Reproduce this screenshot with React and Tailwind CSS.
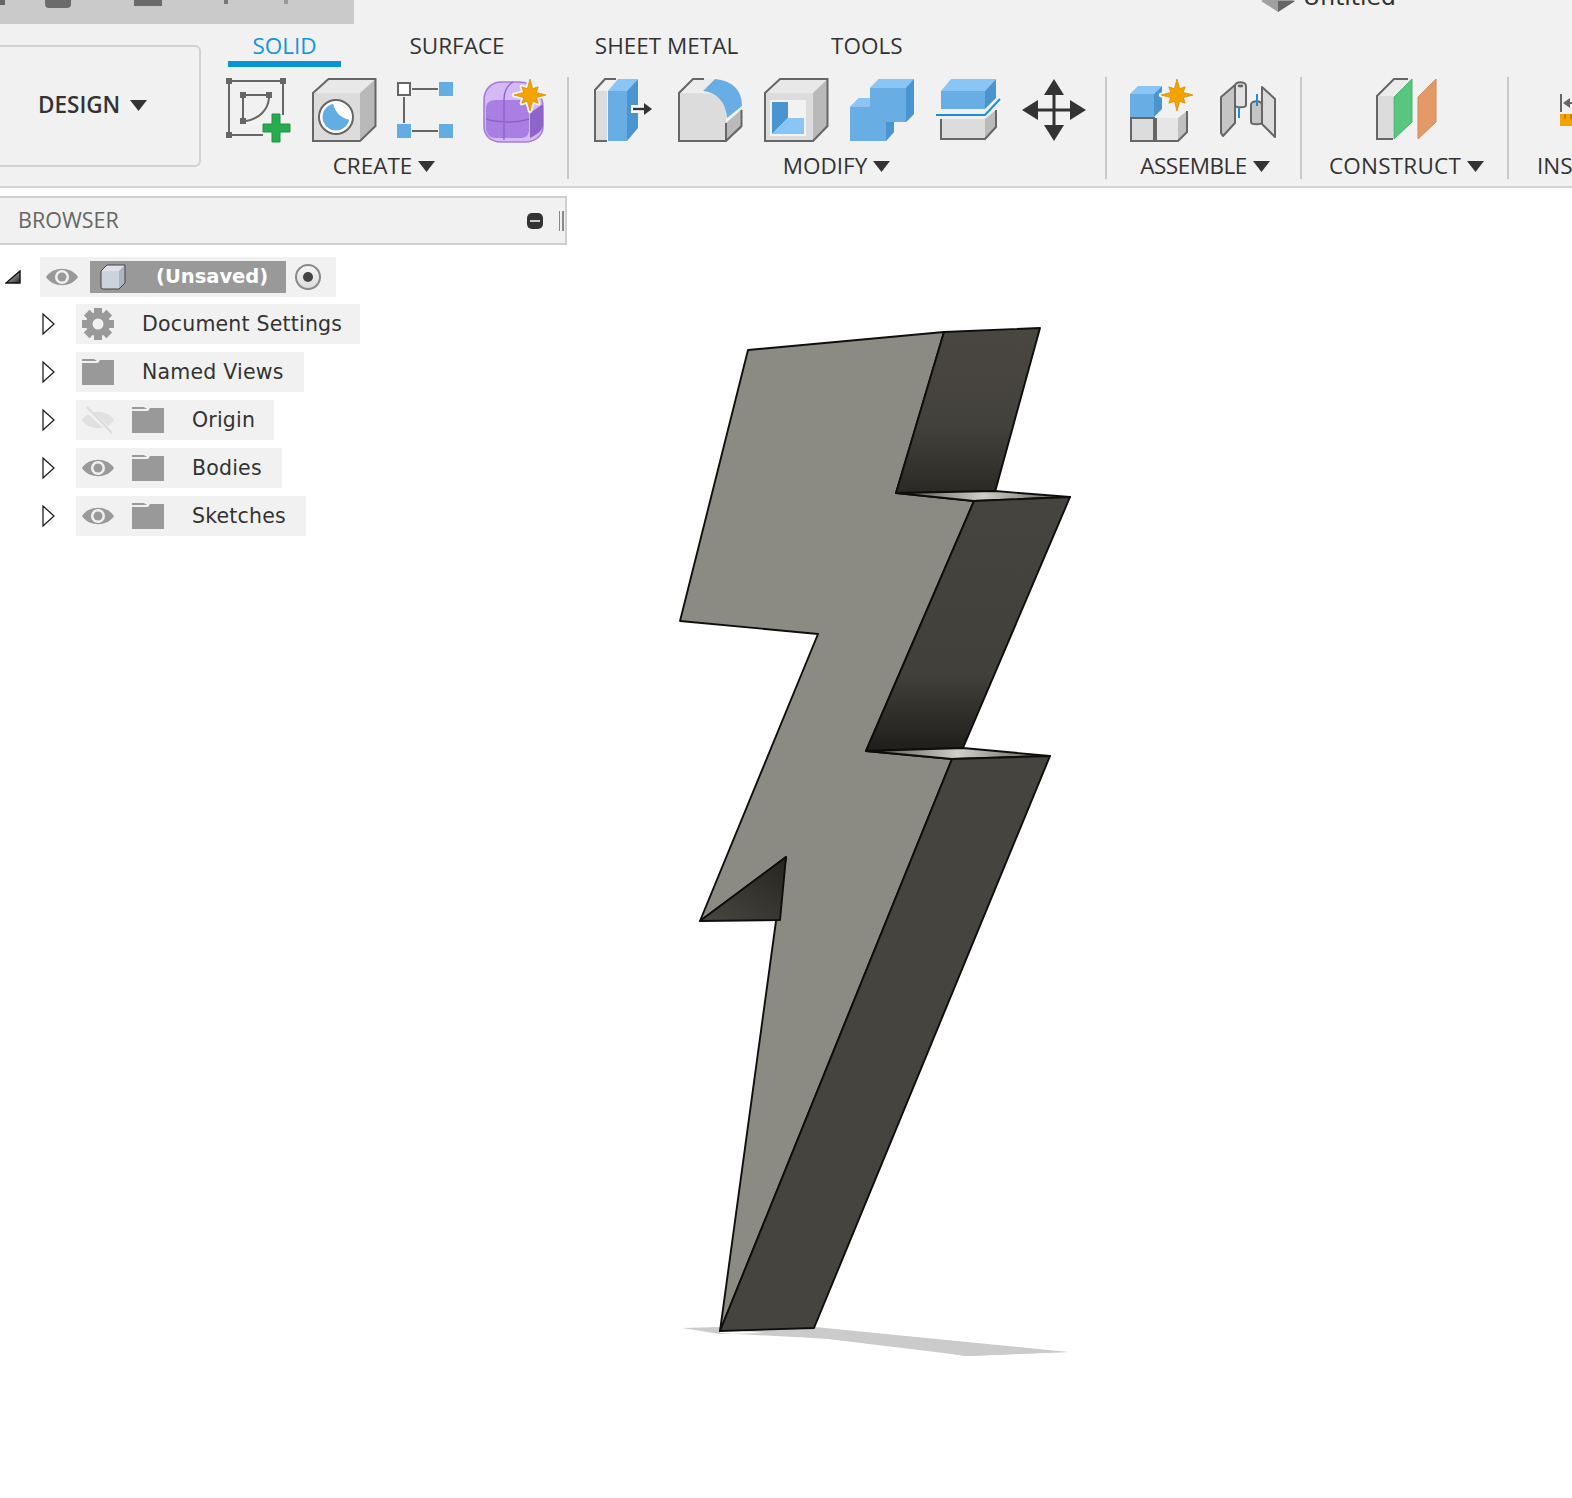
import React from "react";

const G = "#666666";
const Ico = ({ children, w = 64 }) => (
  <svg width={w} height="64" viewBox={`0 0 ${w} 64`} className="shrink-0 overflow-visible">{children}</svg>
);
const Star = ({ cx, cy, r = 16 }) => {
  const pts = [];
  for (let i = 0; i < 16; i++) {
    const a = (i * Math.PI) / 8 - Math.PI / 2;
    const R = i % 2 === 0 ? (i % 4 === 0 ? r : r * 0.72) : r * 0.42;
    pts.push(`${cx + R * Math.cos(a)},${cy + R * Math.sin(a)}`);
  }
  const p = pts.join(" ");
  return (
    <>
      <polygon points={p} fill="#f1f1f1" stroke="#f1f1f1" strokeWidth="4.5" strokeLinejoin="round" />
      <polygon points={p} fill="#f5a300" stroke="#d98f00" strokeWidth="0.8" />
    </>
  );
};
const Caret = ({ w = 17, h = 11 }) => (
  <svg width={w} height={h} viewBox="0 0 17 11" className="shrink-0"><polygon points="0,0 17,0 8.5,11" fill="#333" /></svg>
);

const Sketch = () => (
  <Ico>
    <g stroke={G} strokeWidth="2" fill="none">
      <path d="M5 3H54M56 6V37M2 6V54M5 57H36M18 17H40M16 20V40M19 43C32 41 41 32 42 20" />
    </g>
    {[[2, 3], [56, 3], [2, 57], [16, 17], [42, 17], [16, 43]].map(([x, y]) => (
      <rect key={x + "-" + y} x={x - 3} y={y - 3} width="6" height="6" fill={G} />
    ))}
    <path d="M45 36h8v10h10v8H53v10h-8V54H36v-8h9z" fill="#26ab50" stroke="#1d9443" strokeWidth="1" />
  </Ico>
);
const Extrude = () => (
  <Ico>
    <polygon points="1,15 48,15 48,63 1,63" fill="#dcdcdc" />
    <polygon points="1,15 16.5,1 63.5,1 48,15" fill="#e8e8e8" />
    <polygon points="48,15 63.5,1 63.5,48 48,63" fill="#b9b9b9" />
    <path d="M1 15L16.5 1H63.5V48L48 63H1Z" fill="none" stroke={G} strokeWidth="2" />
    <circle cx="24" cy="39" r="17" fill="#fff" stroke={G} strokeWidth="2" />
    <circle cx="24" cy="39" r="13.5" fill="#62ade4" />
    <path d="M21 25 C23 34 28 40 38 42 C39 33 32 24 21 25Z" fill="#fff" />
  </Ico>
);
const Pattern = () => (
  <Ico w={56}>
    <path d="M15 11H41M15 53H41M7 19V45" stroke={G} strokeWidth="2" />
    <rect x="1" y="5" width="12" height="12" fill="#fff" stroke={G} strokeWidth="2" />
    <rect x="42" y="4" width="14" height="14" fill="#62ade4" />
    <rect x="0" y="46" width="14" height="14" fill="#62ade4" />
    <rect x="42" y="46" width="14" height="14" fill="#62ade4" />
  </Ico>
);
const Form = () => (
  <Ico>
    <path d="M1 22C1 11 9 4 18 4H36C50 4 60 14 60 30V48C60 58 52 64 42 64H18C8 64 1 58 1 48Z" fill="#d4b9f5" stroke="#a57ddb" strokeWidth="1.6" />
    <path d="M3 30C3 25 7 22 12 22H38C43 22 46 26 46 31V52C46 57 43 60 38 60H12C7 60 3 56 3 50Z" fill="#a97fe3" />
    <path d="M47 35L60 26V46C60 52 55 56 47 60Z" fill="#8f63c9" />
    <path d="M3 41C15 45 34 45 46 41M21 22V62M30 4C23 8 21 14 21 22" stroke="#8f63c9" strokeWidth="1.4" fill="none" />
    <Star cx={47} cy={17} />
  </Ico>
);
const PressPull = () => (
  <Ico>
    <polygon points="3,13 15,13 15,63 3,63" fill="#dcdcdc" />
    <path d="M15 63H3V12L13 1H24" fill="none" stroke={G} strokeWidth="2" />
    <polygon points="16,13 35,13 35,63 16,63" fill="#68aee4" />
    <polygon points="16,13 26,1 46,1 35,13" fill="#89c6f5" />
    <polygon points="35,13 46,1 46,50 35,63" fill="#4a94cf" />
    <rect x="39" y="27" width="9" height="8" fill="#fff" />
    <path d="M41 31H54" stroke="#333" strokeWidth="2.4" />
    <polygon points="52,25 60,31 52,37" fill="#333" />
  </Ico>
);
const Fillet = () => (
  <Ico>
    <path d="M1 15H25Q48 15 48 39V63H1Z" fill="#dcdcdc" />
    <polygon points="1,15 15,1 37,1 24,14" fill="#ececec" />
    <path d="M25 13L37 1Q64 4 64 28L49 40Q47 16 25 13Z" fill="#68aee4" />
    <polygon points="48,45 64,31 64,50 48,63" fill="#bababa" />
    <path d="M26 1H15L1 15V63H48L63.5 48V32M48 45V63" fill="none" stroke={G} strokeWidth="2" />
  </Ico>
);
const Shell = () => (
  <Ico>
    <polygon points="1,15 49,15 49,63 1,63" fill="#dcdcdc" />
    <polygon points="1,15 16,1 63.5,1 49,15" fill="#e8e8e8" />
    <polygon points="49,15 63.5,1 63.5,48 49,63" fill="#b9b9b9" />
    <path d="M1 15L16 1H63.5V48L49 63H1Z" fill="none" stroke={G} strokeWidth="2" />
    <rect x="6" y="22" width="36" height="36" fill="#f2f2f2" />
    <polygon points="8,24 24,24 24,40 8,56" fill="#4a94cf" />
    <polygon points="8,56 24,40 40,40 40,56" fill="#89c6f5" />
  </Ico>
);
const Combine = () => (
  <Ico>
    <polygon points="0,29 9,20 20,20 20,10 29,1 64,1 64,36 56,44 44,44 44,54 36,63 0,63" fill="#68aee4" />
    <polygon points="20,10 29,1 64,1 56,10" fill="#89c6f5" />
    <polygon points="0,29 9,20 20,20 20,29" fill="#89c6f5" />
    <polygon points="56,10 64,1 64,36 56,44" fill="#4a94cf" />
    <polygon points="36,44 44,44 44,54 36,63" fill="#4a94cf" />
  </Ico>
);
const Split = () => (
  <Ico>
    <polygon points="5,13 49,13 49,31 5,31" fill="#68aee4" />
    <polygon points="5,13 15,1 60,1 49,13" fill="#89c6f5" />
    <polygon points="49,13 60,1 60,20 49,31" fill="#4a94cf" />
    <polygon points="5,41 49,41 49,61 5,61" fill="#dcdcdc" />
    <polygon points="49,41 60,32 60,49 49,61" fill="#bababa" />
    <path d="M5 41V61H49L60 49V32" fill="none" stroke={G} strokeWidth="2" />
    <path d="M0 37H49L64 21" fill="none" stroke="#1b8ddf" strokeWidth="2" />
  </Ico>
);
const Move = () => (
  <Ico>
    <path d="M32 10V54M10 32H54" stroke="#333" strokeWidth="3" />
    <polygon points="32,1 42,17 22,17" fill="#333" />
    <polygon points="32,63 42,47 22,47" fill="#333" />
    <polygon points="0,32 16,22 16,42" fill="#333" />
    <polygon points="64,32 48,22 48,42" fill="#333" />
  </Ico>
);
const NewComponent = () => (
  <Ico>
    <polygon points="1,40 24,40 24,63 1,63" fill="#dcdcdc" stroke={G} strokeWidth="2" />
    <polygon points="26,40 48,40 48,63 26,63" fill="#e6e6e6" />
    <polygon points="32,40 49,40 57,33 57,40" fill="#f2f2f2" />
    <polygon points="48,40 57,33 57,54 48,63" fill="#c0c0c0" />
    <path d="M26 40V63H48L57 54V33" fill="none" stroke={G} strokeWidth="2" />
    <polygon points="0,16 24,16 24,39 0,39" fill="#68aee4" />
    <polygon points="0,16 8,8 32,8 24,16" fill="#89c6f5" />
    <polygon points="24,16 32,8 32,31 24,39" fill="#4a94cf" />
    <Star cx={47} cy={17} />
  </Ico>
);
const Joint = () => (
  <Ico>
    <polygon points="5,19 19,7 19,45 7,58 5,55" fill="#c5c5c5" stroke={G} strokeWidth="2" strokeLinejoin="round" />
    <path d="M19 8C19 3 30 3 30 8V27C30 30 19 30 19 27Z" fill="#e2e2e2" stroke={G} strokeWidth="2" />
    <ellipse cx="24.5" cy="8" rx="3" ry="1.4" fill={G} />
    <path d="M23 29V40" stroke="#1b8ddf" strokeWidth="2" />
    <polygon points="46,9 59,21 59,59 46,46" fill="#dcdcdc" stroke={G} strokeWidth="2" strokeLinejoin="round" />
    <path d="M35 27C35 22 46 22 46 27V44C46 47 35 47 35 44Z" fill="#c5c5c5" stroke={G} strokeWidth="2" />
    <path d="M41 16V28" stroke="#1b8ddf" strokeWidth="2" />
  </Ico>
);
const Construct = () => (
  <Ico>
    <polygon points="3,18 19,18 19,61 3,61" fill="#dcdcdc" />
    <polygon points="3,18 20,1 36,1 19,18" fill="#ececec" />
    <path d="M19 61H3V18L20 1H34" fill="none" stroke={G} strokeWidth="2" />
    <polygon points="20,19 38,1 38,44 20,61" fill="#58c67f" stroke="#4bb26f" strokeWidth="1" />
    <polygon points="44,19 62,1 62,44 44,61" fill="#e49a66" stroke="#d08a58" strokeWidth="1" />
  </Ico>
);
const Insert = () => (
  <Ico w={30}>
    <path d="M5 16V34" stroke={G} strokeWidth="2" />
    <polygon points="7,25 14,20 14,30" fill={G} />
    <path d="M14 25H20" stroke={G} strokeWidth="2" />
    <rect x="4" y="36" width="26" height="12" fill="#f5a300" />
    <path d="M9 36V41M15 36V41M21 36V41" stroke="#b87a00" strokeWidth="1.5" />
  </Ico>
);

const Eye = ({ off }) =>
  off ? (
    <svg width="32" height="28" viewBox="0 0 32 28" className="shrink-0">
      <path d="M0 14C7 3 25 3 32 14C25 25 7 25 0 14Z" fill="#e0e0e0" />
      <path d="M3 2L29 26" stroke="#f1f1f1" strokeWidth="5" />
      <path d="M5 1L30 27" stroke="#dcdcdc" strokeWidth="2" />
    </svg>
  ) : (
    <svg width="32" height="20" viewBox="0 0 32 20" className="shrink-0">
      <path d="M0 10C7 -1 25 -1 32 10C25 21 7 21 0 10Z" fill="#999" />
      <circle cx="16" cy="10" r="7" fill="#f1f1f1" />
      <circle cx="16" cy="10" r="4.5" fill="#999" />
    </svg>
  );
const Folder = () => (
  <svg width="32" height="26" viewBox="0 0 32 26" className="shrink-0">
    <path d="M0 0H12L15 2H0Z" fill="#999" />
    <path d="M0 4H16L18 1H32V26H0Z" fill="#999" />
  </svg>
);
const Gear = () => {
  const teeth = [0, 45, 90, 135];
  return (
    <svg width="32" height="32" viewBox="0 0 32 32" className="shrink-0">
      {teeth.map((a) => (
        <rect key={a} x="12" y="0" width="8" height="32" fill="#999" transform={`rotate(${a} 16 16)`} />
      ))}
      <circle cx="16" cy="16" r="12" fill="#999" />
      <circle cx="16" cy="16" r="5.5" fill="#f1f1f1" />
    </svg>
  );
};
const Tri = () => (
  <svg width="13" height="22" viewBox="0 0 13 22" className="shrink-0">
    <polygon points="1,1 12,11 1,21" fill="#fff" stroke="#222" strokeWidth="1.3" />
  </svg>
);

const treeFont = "font-['DejaVu_Sans','Liberation_Sans',sans-serif]";

const Row = ({ width, eye, gear, off, label }) => (
  <div className="flex items-center h-10">
    <div className="w-[76px] pl-[42px] flex items-center"><Tri /></div>
    <div style={{ width }} className="h-10 bg-[#f1f1f1] flex items-center pl-[6px]">
      {eye && <div className="mr-[18px]"><Eye off={off} /></div>}
      {gear ? <Gear /> : <Folder />}
      <span className={`ml-[28px] text-[#333] text-[20.5px] tracking-[0.2px] whitespace-nowrap ${treeFont}`}>{label}</span>
    </div>
  </div>
);

const Group = ({ children, label, gap = "gap-[22px]", className = "", labelClass = "" }) => (
  <div className={`h-[102px] flex flex-col shrink-0 border-r-2 border-[#c9c9c9] ${className}`}>
    <div className={`flex ${gap} h-[64px] mt-px`}>{children}</div>
    <div className={`flex items-center justify-center gap-[6px] mt-[11px] h-[26px] text-[22.5px] text-[#333] whitespace-nowrap ${labelClass}`}>
      <span>{label}</span>
      <Caret />
    </div>
  </div>
);

export default function App() {
  return (
    <div className="relative w-[1572px] h-[1498px] bg-white overflow-hidden font-['Open_Sans','Liberation_Sans',sans-serif]">
      <header className="h-[188px] bg-[#f1f1f1] border-b-2 border-[#d2d2d2] overflow-hidden">
        <div className="h-6 flex justify-between">
          <div className="w-[354px] h-6 bg-[#cacaca] flex items-start">
            <div className="w-[5px] h-[5px] bg-[#666]" />
            <div className="ml-[40px] w-[26px] h-2 bg-[#6b6b6b] rounded-b-sm" />
            <div className="ml-[63px] w-[28px] h-[6px] bg-[#6b6b6b]" />
            <div className="ml-[62px] w-1 h-1 bg-[#777]" />
            <div className="ml-[56px] w-1 h-1 bg-[#999]" />
          </div>
          <div className="flex items-start mr-[176px] -mt-[19px]">
            <svg width="34" height="32" viewBox="0 0 34 32">
              <polygon points="0,20 17,12 34,20 17,31" fill="#a0a0a0" />
              <polygon points="17,20 34,20 17,31" fill="#666" />
            </svg>
            <span className="ml-[8px] text-[23.5px] leading-[32px] text-[#333] font-['DejaVu_Sans',sans-serif]">Untitled</span>
          </div>
        </div>
        <div className="flex">
          <div className="-ml-[10px] w-[211px] h-[122px] mt-[21px] border-2 border-[#d2d2d2] rounded-md flex items-center pl-[46px] pb-[2px] shrink-0">
            <span className="font-semibold text-[22.5px] text-[#333]">DESIGN</span>
            <span className="ml-[10px]"><Caret /></span>
          </div>
          <div className="ml-[26px] flex flex-col">
            <nav className="flex h-[43px] pl-px text-[22.5px] text-[#333] leading-[43px]">
              <div className="w-[113px] h-[43px] text-center text-[#0f97dd] border-b-[6px] border-[#0696d7]">SOLID</div>
              <div className="ml-[68px] w-[96px] text-center whitespace-nowrap">SURFACE</div>
              <div className="ml-[89px] w-[145px] text-center whitespace-nowrap">SHEET METAL</div>
              <div className="ml-[92px] w-[71px] text-center whitespace-nowrap">TOOLS</div>
            </nav>
            <div className="flex mt-[10px]">
              <Group label="CREATE" gap="gap-[21px]" className="pr-[20px]" labelClass="pr-[6px]">
                <Sketch /><Extrude /><Pattern /><div className="ml-[9px]"><Form /></div>
              </Group>
              <Group label="MODIFY" className="pl-[23px] pr-[19px]" labelClass="pr-[5px]">
                <PressPull /><Fillet /><Shell /><Combine /><Split /><Move />
              </Group>
              <Group label="ASSEMBLE" className="pl-[23px] pr-[20px]" labelClass="tracking-[-0.5px]">
                <NewComponent /><Joint />
              </Group>
              <Group label="CONSTRUCT" className="pl-[24px] pr-[21px]" labelClass="tracking-[0.2px] pl-px">
                <div className="mx-[48px]"><Construct /></div>
              </Group>
              <div className="h-[102px] flex flex-col shrink-0">
                <div className="h-[64px] mt-px pl-[47px]"><Insert /></div>
                <div className="flex items-center mt-[11px] h-[26px] pl-[28px] text-[22.5px] text-[#333] whitespace-nowrap">INS</div>
              </div>
            </div>
          </div>
        </div>
      </header>

      <main className="relative h-[1310px]">
        <svg className="absolute left-[660px] top-[122px]" width="420" height="1060" viewBox="660 310 420 1060">
          <defs>
            <linearGradient id="s1" x1="0" y1="0" x2="0" y2="1">
              <stop offset="0" stopColor="#4a4741" />
              <stop offset="0.6" stopColor="#43413b" />
              <stop offset="1" stopColor="#2a2925" />
            </linearGradient>
            <linearGradient id="s2" x1="0" y1="0" x2="0" y2="1">
              <stop offset="0" stopColor="#46443e" />
              <stop offset="0.7" stopColor="#41403a" />
              <stop offset="1" stopColor="#1f1e1b" />
            </linearGradient>
            <linearGradient id="t1" x1="0" y1="0" x2="1" y2="0">
              <stop offset="0" stopColor="#4a4945" />
              <stop offset="0.5" stopColor="#d0d0c8" />
              <stop offset="1" stopColor="#55544e" />
            </linearGradient>
            <linearGradient id="n1" x1="0" y1="1" x2="1" y2="0">
              <stop offset="0" stopColor="#4a4741" />
              <stop offset="1" stopColor="#26251f" />
            </linearGradient>
          </defs>
          <polygon points="682,1328 720,1327 720,1333 1068,1352 965,1356 815,1332 720,1334" fill="#cbcbcb" />
          <polygon points="720,1329 815,1327 1068,1352 968,1356 820,1338" fill="#cbcbcb" />
          <g stroke="#0e0e0c" strokeWidth="1.9" strokeLinejoin="round">
            <polygon points="748,350 944,332 896,493 974,501 866,751 952,759 720,1331 776,921 786,857 700,921 818,634 680,621" fill="#8b8a83" />
            <polygon points="944,332 1040,328 995,492 896,493" fill="url(#s1)" />
            <polygon points="896,493 995,491 1070,497 974,501" fill="url(#t1)" />
            <polygon points="974,501 1070,497 963,748 866,751" fill="url(#s2)" />
            <polygon points="866,751 963,748 1050,756 952,759" fill="url(#t1)" />
            <polygon points="952,759 1050,756 814,1328 720,1331" fill="#46443e" />
            <polygon points="700,921 786,857 780,920" fill="url(#n1)" />
          </g>
        </svg>

        <section className="relative pt-2">
          <div className="w-[567px] h-[49px] bg-[#f1f1f1] border-y-2 border-r-2 border-[#cfcfcf] flex items-center pl-[18px] pr-px">
            <span className="text-[21.5px] text-[#666]">BROWSER</span>
            <div className="ml-auto w-4 h-4 rounded-[5px] bg-[#333] flex items-center justify-center">
              <div className="w-[10px] h-[2px] bg-[#ccc]" />
            </div>
            <div className="ml-[16px] w-[5px] h-[20px] border-l border-r-2 border-[#888]" />
          </div>

          <div className="mt-3 flex flex-col gap-2">
            <div className="flex items-center h-10 -mb-px">
              <div className="w-[40px] pl-[5px]">
                <svg width="16" height="14" viewBox="0 0 16 14">
                  <defs>
                    <linearGradient id="tg" x1="0" y1="0" x2="1" y2="1">
                      <stop offset="0" stopColor="#eee" />
                      <stop offset="1" stopColor="#222" />
                    </linearGradient>
                  </defs>
                  <polygon points="1,13 15,1 15,13" fill="url(#tg)" stroke="#111" strokeWidth="1.4" />
                </svg>
              </div>
              <div className="w-[296px] h-10 bg-[#f1f1f1] flex items-center pl-[6px]">
                <Eye />
                <div className="ml-[12px] w-[196px] h-8 bg-[#999] flex items-center pl-[10px]">
                  <svg width="26" height="26" viewBox="0 0 26 26" className="shrink-0">
                    <path d="M1 7L7 1H25V19L19 25H3Q1 25 1 23Z" fill="#cdd3dc" />
                    <path d="M7 1H25L19 7H1Z" fill="#dfe3e9" />
                    <path d="M19 7L25 1V19L19 25Z" fill="#aeb5c0" />
                    <path d="M1 7L7 1H25V19L19 25H3Q1 25 1 23Z" fill="none" stroke="#444" strokeWidth="1" />
                  </svg>
                  <span className={`ml-[30px] text-white font-bold text-[19.5px] whitespace-nowrap ${treeFont}`}>(Unsaved)</span>
                </div>
                <div className="ml-[9px] w-[26px] h-[26px] rounded-full border-2 border-[#888] bg-gradient-to-b from-[#f5f5f5] to-[#dcdcdc] flex items-center justify-center">
                  <div className="w-[10px] h-[10px] rounded-full bg-[#444]" />
                </div>
              </div>
            </div>
            <Row width={284} gear label="Document Settings" />
            <Row width={228} label="Named Views" />
            <Row width={198} eye off label="Origin" />
            <Row width={206} eye label="Bodies" />
            <Row width={230} eye label="Sketches" />
          </div>
        </section>
      </main>
    </div>
  );
}
